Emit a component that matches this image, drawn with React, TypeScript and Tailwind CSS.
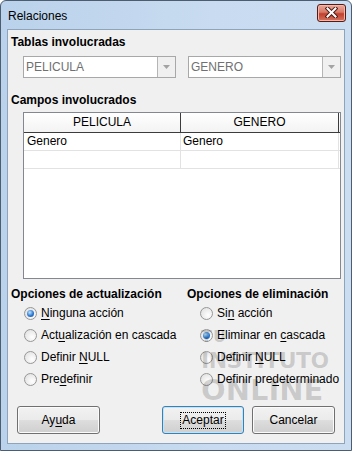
import React from "react";

const Radio = ({ checked }: { checked?: boolean }) => (
  <span className="w-[13px] h-[13px] shrink-0 rounded-full border border-[#979797] bg-[radial-gradient(circle_at_65%_65%,#ffffff,#dcdcdc)] flex items-center justify-center">
    {checked && (
      <span className="w-[7px] h-[7px] rounded-full bg-[radial-gradient(circle_at_40%_35%,#bfe6ff,#2d78d0_55%,#174c93)]" />
    )}
  </span>
);

const U = ({ children }: { children: React.ReactNode }) => (
  <span className="underline decoration-1 underline-offset-[2px]">{children}</span>
);

const Option = ({ checked, children }: { checked?: boolean; children: React.ReactNode }) => (
  <div className="h-[22px] pl-[13px] flex items-center gap-[4px]">
    <Radio checked={checked} />
    <span>{children}</span>
  </div>
);

const Combo = ({ value }: { value: string }) => (
  <div className="w-[153px] h-[22px] border border-[#a8a8a8] bg-white flex">
    <span className="flex-1 pl-[2px] leading-[20px] text-[#707070]">{value}</span>
    <span className="w-[18px] border-l border-[#b5b5b5] bg-[#f0f0f0] flex items-center justify-center">
      <svg width="7" height="4" viewBox="0 0 7 4">
        <path d="M0 0h7L3.5 4z" fill="#a3a3a3" />
      </svg>
    </span>
  </div>
);

const Button = ({ children, primary, w }: { children: React.ReactNode; primary?: boolean; w: string }) => (
  <div
    className={
      (primary
        ? "border-[#3c7fb1] shadow-[inset_0_0_0_1px_#bde4f8] "
        : "border-[#707070] shadow-[inset_0_0_0_1px_#fbfbfb] ") +
      w +
      " h-[28px] rounded-[3px] border bg-[linear-gradient(#f2f2f2,#ebebeb_48%,#dddddd_52%,#cfcfcf)] flex items-center justify-center"
    }
  >
    {children}
  </div>
);

export default function App() {
  return (
    <div className="w-[352px] h-[451px] relative overflow-hidden rounded-t-[6px] border border-[#4d5d70] bg-[linear-gradient(90deg,#bad2eb,#c8dbf0_60%,#cbddf1)] flex flex-col text-[12px] text-black font-['Liberation_Sans',Arial,sans-serif]">
      {/* title bar */}
      <div className="h-[28px] shrink-0 flex items-center justify-between pl-[7px] pr-[5px]">
        <span className="leading-[16px] pt-[1px]">Relaciones</span>
        <div className="w-[29px] h-[18px] mb-[5px] rounded-[3px] border border-[#5a1a14] bg-[linear-gradient(#e9a99b,#d97a68_45%,#c2402d_55%,#d4735e)] shadow-[inset_0_0_0_1px_#f0b9ad] flex items-center justify-center">
          <svg width="13" height="11" viewBox="0 0 13 11">
            <path d="M2.5 1.5l8 8M10.5 1.5l-8 8" stroke="#4a1a14" strokeWidth="4" strokeLinecap="square" />
            <path d="M2.5 1.5l8 8M10.5 1.5l-8 8" stroke="#ffffff" strokeWidth="2" strokeLinecap="square" />
          </svg>
        </div>
      </div>

      {/* client area */}
      <div className="mx-[6px] mb-[6px] flex-1 border border-[#8ea4bd] bg-[#f0f0f0] flex flex-col">
        <div className="mt-[4px] pl-[3px] leading-[16px] font-bold">Tablas involucradas</div>
        <div className="mt-[6px] pl-[15px] flex gap-[12px]">
          <Combo value="PELICULA" />
          <Combo value="GENERO" />
        </div>

        <div className="mt-[14px] pl-[3px] leading-[16px] font-bold">Campos involucrados</div>
        <div className="mt-[4px] ml-[15px] w-[318px] h-[167px] border border-[#828790] bg-white">
          <div className="h-[20px] flex border-b border-[#3c3c3c] bg-[linear-gradient(#ffffff,#f3f3f3)]">
            <div className="w-[157px] border-r border-[#3c3c3c] text-center leading-[19px]">PELICULA</div>
            <div className="w-[158px] border-r border-[#3c3c3c] text-center leading-[19px]">GENERO</div>
          </div>
          <div className="h-[18px] flex border-b border-[#e2e2e2]">
            <div className="w-[157px] border-r border-[#e2e2e2] pl-[3px] leading-[17px]">Genero</div>
            <div className="w-[158px] border-r border-[#e2e2e2] pl-[2px] leading-[17px]">Genero</div>
          </div>
          <div className="h-[18px] flex border-b border-[#e2e2e2]">
            <div className="w-[157px] border-r border-[#e2e2e2]" />
            <div className="w-[158px] border-r border-[#e2e2e2]" />
          </div>
        </div>

        <div className="mt-[7px] flex">
          <div className="w-[179px] pl-[3px]">
            <div className="leading-[16px] font-bold">Opciones de actualización</div>
            <Option checked>
              <U>N</U>inguna acción
            </Option>
            <Option>
              Act<U>u</U>alización en cascada
            </Option>
            <Option>
              Definir <U>N</U>ULL
            </Option>
            <Option>
              Pre<U>d</U>efinir
            </Option>
          </div>
          <div className="flex-1">
            <div className="leading-[16px] font-bold">Opciones de eliminación</div>
            <Option>
              Si<U>n</U> acción
            </Option>
            <Option checked>
              Eliminar en <U>c</U>ascada
            </Option>
            <Option>
              Definir <U>N</U>ULL
            </Option>
            <Option>
              Definir pre<U>d</U>eterminado
            </Option>
          </div>
        </div>

        <div className="mt-[16px] px-[9px] flex items-center">
          <Button w="w-[83px]">
            Ay<U>u</U>da
          </Button>
          <div className="flex-1" />
          <Button primary w="w-[82px]">
            <span className="border border-dotted border-black px-[1px] leading-[15px]">Aceptar</span>
          </Button>
          <div className="w-[8px]" />
          <Button w="w-[83px]">Cancelar</Button>
        </div>
      </div>

      {/* watermark */}
      <div className="absolute left-[200px] top-[328px] pointer-events-none flex flex-col font-bold text-black/[0.16] leading-none font-['DejaVu_Sans',sans-serif]">
        <span className="text-[16px] tracking-[1px]">TU</span>
        <span className="text-[22px] tracking-[-0.5px] mt-[5px]">INSTITUTO</span>
        <span className="text-[29px] mt-[4px]">ONLINE</span>
      </div>
    </div>
  );
}
